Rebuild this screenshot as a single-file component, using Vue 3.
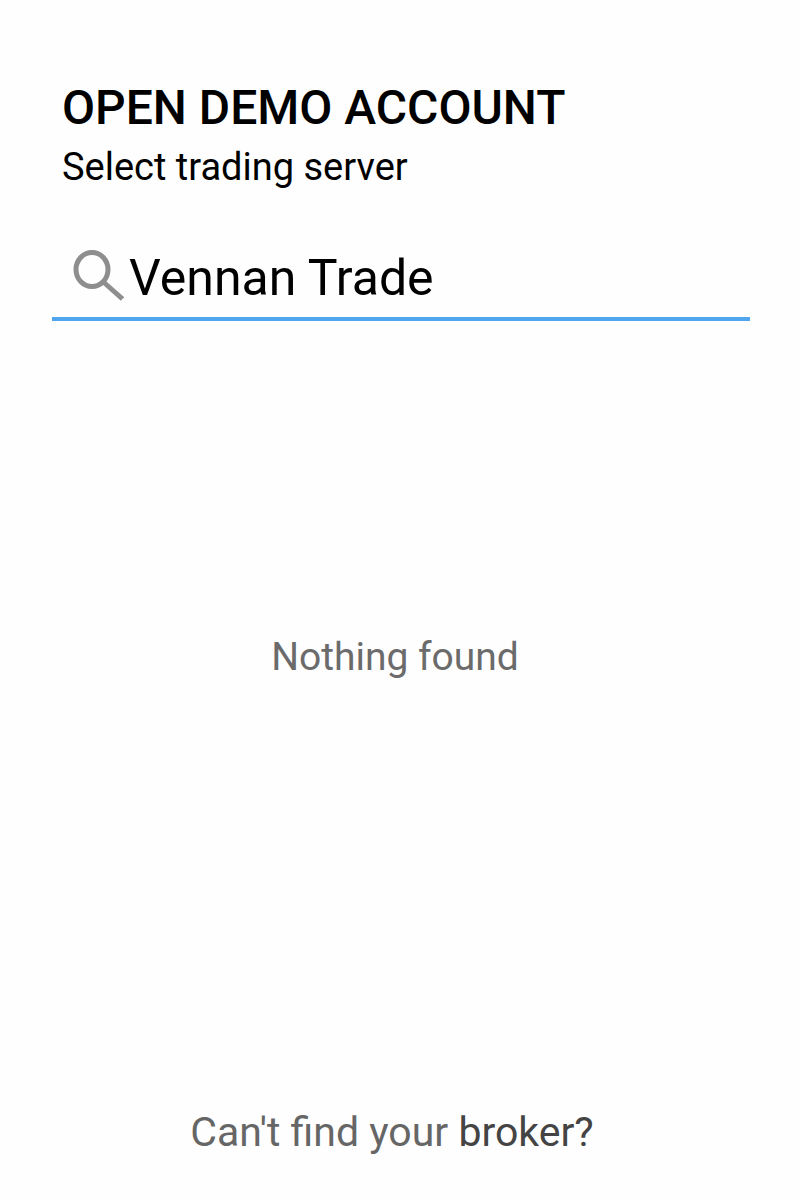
<template>
  <div class="page">
    <header class="header">
      <h1 class="title">OPEN DEMO ACCOUNT</h1>
      <p class="subtitle">Select trading server</p>
    </header>

    <label class="search">
      <svg class="search-icon" viewBox="0 0 52 52" aria-hidden="true">
        <ellipse cx="20" cy="19.5" rx="16" ry="17" />
        <path d="M32 32.5 L50.5 49" />
      </svg>
      <input v-model="query" class="search-input" type="text" aria-label="Server" spellcheck="false" />
    </label>

    <main class="results">
      <p class="empty">Nothing found</p>
    </main>

    <footer class="footer">
      <a class="help" href="#">Can't find your <span class="help-strong">broker?</span></a>
    </footer>
  </div>
</template>

<script setup>
import { ref } from 'vue'

const query = ref('Vennan Trade')
</script>

<style>
body {
  margin: 0;
  background: #fefefe;
}
</style>

<style scoped>
.page {
  min-height: 100vh;
  box-sizing: border-box;
  display: flex;
  flex-direction: column;
  padding: 80px 50px 44px 52px;
  font-family: Roboto, "Liberation Sans", sans-serif;
  color: #000;
}

.header {
  padding: 0 10px;
}

.title {
  margin: 0;
  font-size: 48px;
  font-weight: 500;
  line-height: 56px;
}

.subtitle {
  margin: 8px 0 0;
  font-size: 38px;
  line-height: 46px;
}

.search {
  display: flex;
  align-items: center;
  margin-top: 50px;
  padding: 8px 0 9px 20px;
  border-bottom: 4px solid #4fa6ee;
}

.search-icon {
  flex: none;
  width: 52px;
  height: 52px;
  margin-bottom: 4px;
  fill: none;
  stroke: #8e8e8e;
  stroke-width: 5;
}

.search-input {
  flex: 1;
  min-width: 0;
  height: 60px;
  padding: 0 0 0 5px;
  border: 0;
  outline: 0;
  background: transparent;
  font: inherit;
  font-size: 50px;
  color: inherit;
}

.results {
  flex: 1;
  display: flex;
  align-items: center;
  justify-content: center;
  padding: 0 12px 116px 0;
}

.empty {
  margin: 0;
  font-size: 39px;
  line-height: 48px;
  color: #6b6b6b;
}

.footer {
  padding-right: 18px;
  text-align: center;
}

.help {
  font-size: 41px;
  line-height: 48px;
  color: #666;
  text-decoration: none;
}

.help-strong {
  color: #444;
}
</style>
